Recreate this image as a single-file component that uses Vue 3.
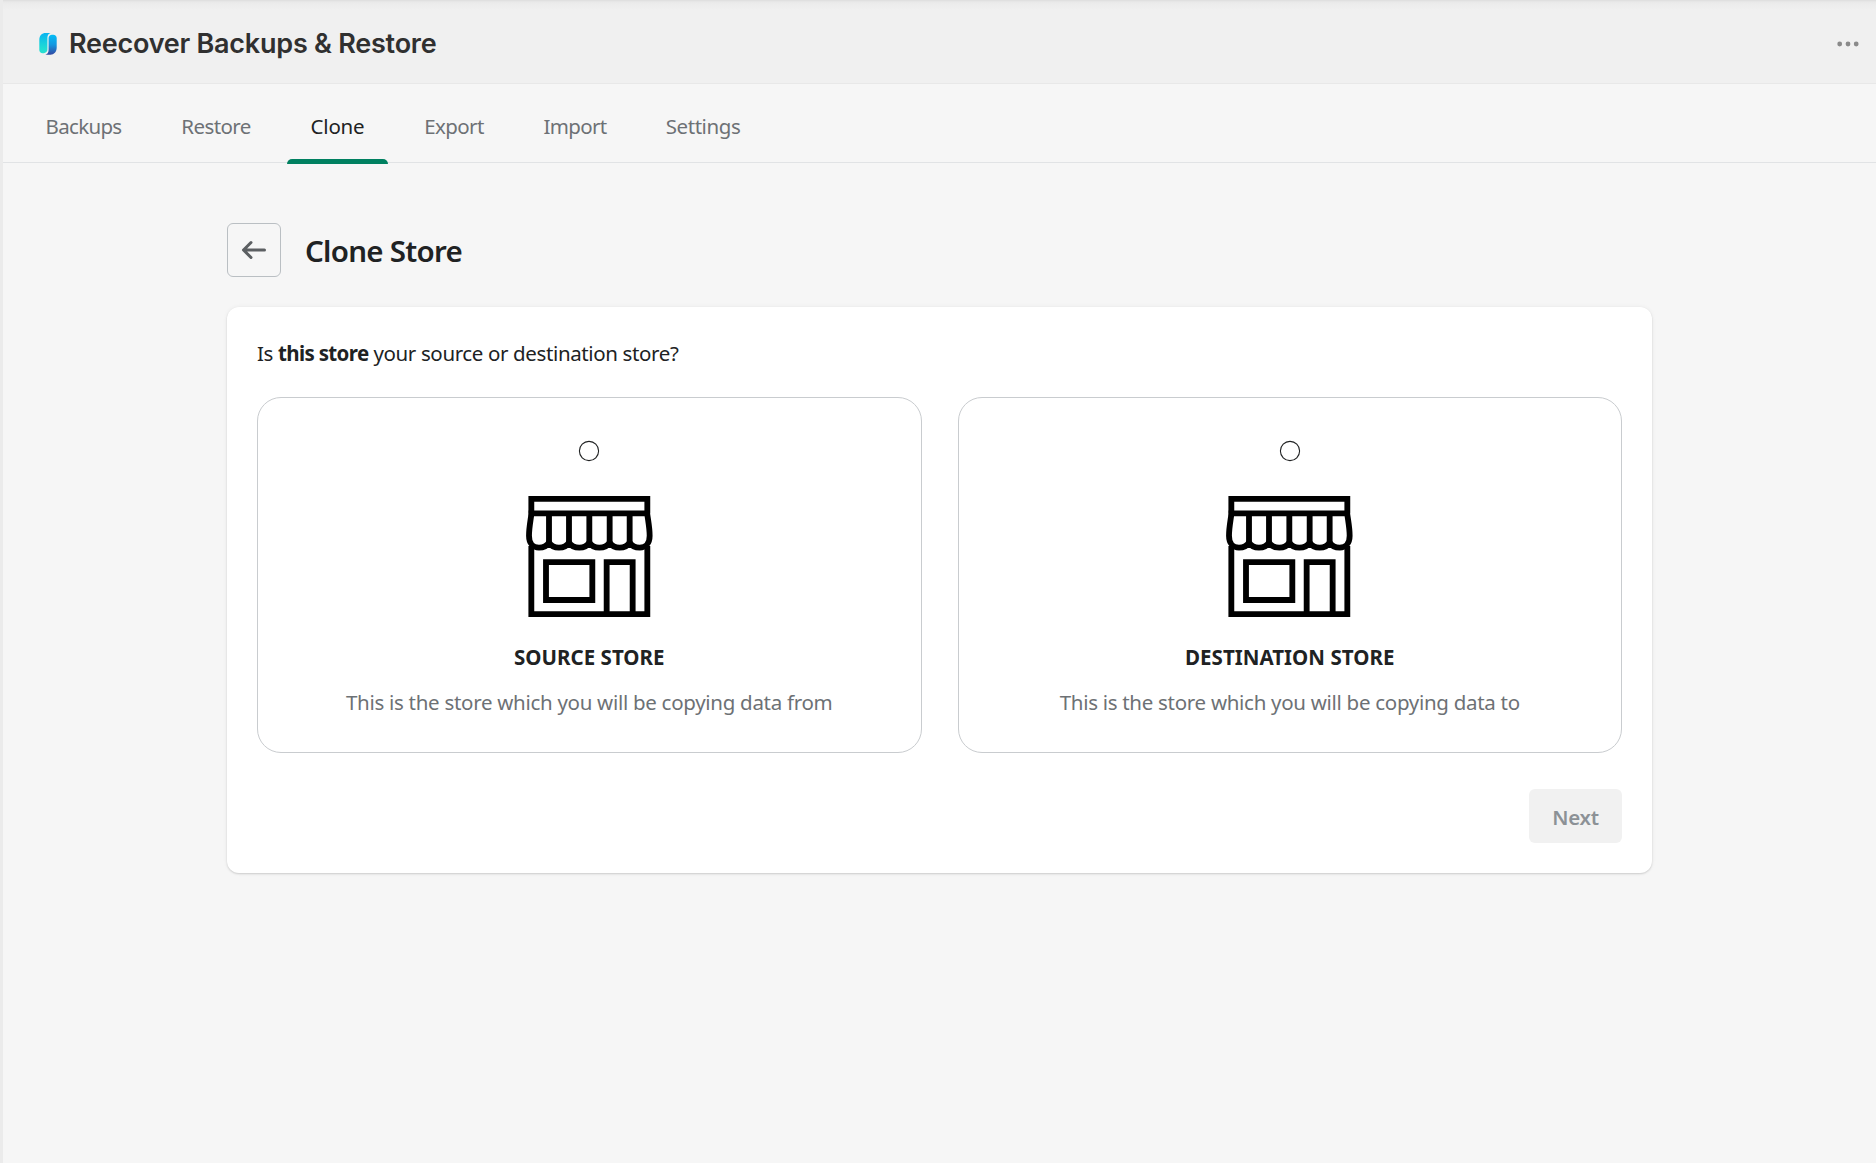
<script setup>
import { ref } from 'vue'

const tabs = [
  { label: 'Backups', spacing: -0.68 },
  { label: 'Restore', spacing: -0.6 },
  { label: 'Clone', spacing: -0.2 },
  { label: 'Export', spacing: -0.6 },
  { label: 'Import', spacing: -0.65 },
  { label: 'Settings', spacing: -0.42 },
]
const activeTab = ref('Clone')

const options = [
  { id: 'source', title: 'Source store', text: 'This is the store which you will be copying data from' },
  { id: 'destination', title: 'Destination store', text: 'This is the store which you will be copying data to' },
]
const selected = ref(null)
</script>

<template>
  <div class="app">
    <header class="titlebar">
      <svg class="logo" width="18" height="22" viewBox="0 0 18 22">
        <defs>
          <linearGradient id="logoLeft" x1="0" y1="0" x2="0" y2="1">
            <stop offset="0" stop-color="#08b4f0" />
            <stop offset="0.75" stop-color="#20dcd4" />
            <stop offset="1" stop-color="#2adfd0" />
          </linearGradient>
          <linearGradient id="logoRight" x1="0" y1="0" x2="0" y2="1">
            <stop offset="0" stop-color="#04bdf6" />
            <stop offset="0.5" stop-color="#1397e0" />
            <stop offset="1" stop-color="#3348a2" />
          </linearGradient>
        </defs>
        <path d="M0.3 7C0.3 2.6 3 0 6.6 0H11.6C9.3 0.8 8.4 2.6 8.4 4.8V16.6C8.4 18.7 6.8 20.2 4.8 20.2H3.6C1.7 20.2 0.3 18.8 0.3 17Z" fill="url(#logoLeft)" />
        <path d="M9.6 5C9.6 3 11 1.7 13 1.7H14.2C16.3 1.7 17.7 3.1 17.7 5V14.6C17.7 19 15 21.8 11.4 21.8H6.4C8.7 21 9.6 19.2 9.6 17Z" fill="url(#logoRight)" />
      </svg>
      <h1 class="app-name">Reecover Backups &amp; Restore</h1>
      <svg class="more" width="22" height="6" viewBox="0 0 22 6" fill="#8a8a8a">
        <circle cx="2.7" cy="3" r="2.4" />
        <circle cx="11" cy="3" r="2.4" />
        <circle cx="19.2" cy="3" r="2.4" />
      </svg>
    </header>

    <nav class="tabs">
      <button
        v-for="tab in tabs"
        :key="tab.label"
        class="tab"
        :class="{ active: tab.label === activeTab }"
        :style="{ letterSpacing: tab.spacing + 'px' }"
        @click="activeTab = tab.label"
      >{{ tab.label }}</button>
    </nav>

    <main class="page">
      <div class="page-head">
        <button class="back" aria-label="Back">
          <svg width="30" height="30" viewBox="0 0 20 20" fill="#5c5f62">
            <path d="M17 9H5.414l3.293-3.293a.999.999 0 1 0-1.414-1.414l-5 5a.999.999 0 0 0 0 1.414l5 5a.997.997 0 0 0 1.414 0 .999.999 0 0 0 0-1.414L5.414 11H17a1 1 0 1 0 0-2z" />
          </svg>
        </button>
        <h2 class="page-title">Clone Store</h2>
      </div>

      <section class="card">
        <p class="question">Is <b>this store</b> your source or destination store?</p>

        <div class="options">
          <div
            v-for="option in options"
            :key="option.id"
            class="option"
            @click="selected = option.id"
          >
            <svg class="radio" width="22" height="22" viewBox="0 0 22 22">
              <circle cx="11" cy="11" r="9.6" fill="none" stroke="#202223" stroke-width="1.1" />
              <circle v-if="selected === option.id" cx="11" cy="11" r="5" fill="#202223" />
            </svg>
            <svg class="shop" width="126.67" height="121" viewBox="0 0 380 363" fill="none" stroke="#000" stroke-width="17.5">
              <path d="M16 52V8.7H364V52" />
              <path d="M8 52H372" />
              <path d="M16 150V354.500H364V150" />
              <path d="M16.500 52C13 78 9 96 9 119C9 140 20 155 39 155C54 155 64 148 69 140C74 148 84 155 99 155C114 155 124 148 129 140C134 148 144 155 160 155C175 155 185 148 190 140C195 148 205 155 220 155C236 155 246 148 251 140C256 148 266 155 281 155C296 155 306 148 311 140C316 148 326 155 341 155C360 155 371 140 371 119C371 96 367 78 363.500 52" />
              <path d="M69 52V144M129 52V144M190 52V144M251 52V144M311 52V144" />
              <path d="M60 198.300H199V312H60Z" />
              <path d="M242 355V198.300H320V355" />
            </svg>
            <h3 class="option-title">{{ option.title }}</h3>
            <p class="option-text">{{ option.text }}</p>
          </div>
        </div>

        <div class="actions">
          <button class="next" disabled>Next</button>
        </div>
      </section>
    </main>
  </div>
</template>

<style>
body {
  background: #f6f6f6;
}
</style>

<style scoped>
.app {
  box-sizing: border-box;
  min-height: 1163px;
  border-left: 3px solid #ebebeb;
  background: #f6f6f6;
  color: #202223;
  font-family: "Segoe UI", "Noto Sans", sans-serif;
  font-size: 20.5px;
  line-height: 30px;
}
h1, h2, h3, p {
  margin: 0;
}
button {
  font: inherit;
  padding: 0;
  border: 0;
  background: none;
}
svg {
  display: block;
}
.titlebar {
  box-sizing: border-box;
  height: 84px;
  padding: 4px 17px 0 36px;
  display: flex;
  align-items: center;
  border-bottom: 1px solid #e8e8e8;
  background: linear-gradient(#dcdcdc 0, #e4e4e4 1px, #ebebeb 3px, #f0f0f0 10px);
}
.app-name {
  margin-left: 12px;
  font-family: Inter, sans-serif;
  font-size: 27px;
  font-weight: 600;
  letter-spacing: -0.24px;
  line-height: 36px;
  color: #303030;
}
.more {
  margin-left: auto;
}
.tabs {
  box-sizing: border-box;
  height: 79px;
  padding-left: 13px;
  display: grid;
  grid-template-columns: 135px 130px 113px 120px 122px 134px;
  border-bottom: 1px solid #e1e3e5;
}
.tab {
  height: 80px;
  display: flex;
  flex-direction: column;
  align-items: center;
  padding-top: 27px;
  color: #6d7175;
  line-height: 30px;
}
.tab.active {
  color: #202223;
}
.tab.active::after {
  content: "";
  width: 101px;
  height: 5px;
  margin-top: 18px;
  border-radius: 6px 6px 0 0;
  background: #008060;
}
.page {
  width: 1425px;
  margin-left: 224px;
  padding-top: 60px;
}
.page-head {
  display: flex;
  align-items: center;
  gap: 24px;
}
.back {
  box-sizing: border-box;
  width: 54px;
  height: 54px;
  display: flex;
  align-items: center;
  justify-content: center;
  border: 1px solid #babfc3;
  border-radius: 6px;
}
.page-title {
  font-size: 29.5px;
  font-weight: 600;
  letter-spacing: -0.72px;
  line-height: 42px;
  padding-top: 2px;
}
.card {
  box-sizing: border-box;
  height: 566px;
  margin-top: 30px;
  padding: 30px;
  border-radius: 12px;
  background: #fff;
  box-shadow: 0 0 5px rgba(23, 24, 24, 0.05), 0 1px 2px rgba(0, 0, 0, 0.15);
}
.question {
  height: 60px;
  line-height: 32px;
  letter-spacing: -0.37px;
}
.question b {
  letter-spacing: -0.65px;
}
.options {
  display: grid;
  grid-template-columns: 1fr 1fr;
  gap: 36px;
}
.option {
  box-sizing: border-box;
  height: 356px;
  padding-top: 42px;
  display: flex;
  flex-direction: column;
  align-items: center;
  border: 1px solid #c9cccf;
  border-radius: 24px;
}
.shop {
  margin-top: 34px;
}
.option-title {
  margin-top: 25px;
  font-size: 20.5px;
  font-weight: 700;
  letter-spacing: 0.03px;
  text-transform: uppercase;
}
.option-text {
  margin-top: 15px;
  color: #6d7175;
  letter-spacing: -0.29px;
}
.actions {
  margin-top: 36px;
  display: flex;
  justify-content: flex-end;
}
.next {
  width: 93px;
  height: 54px;
  padding-top: 2px;
  border-radius: 6px;
  background: #f1f1f1;
  color: #8c9196;
  font-weight: 600;
  letter-spacing: -0.3px;
}
</style>
